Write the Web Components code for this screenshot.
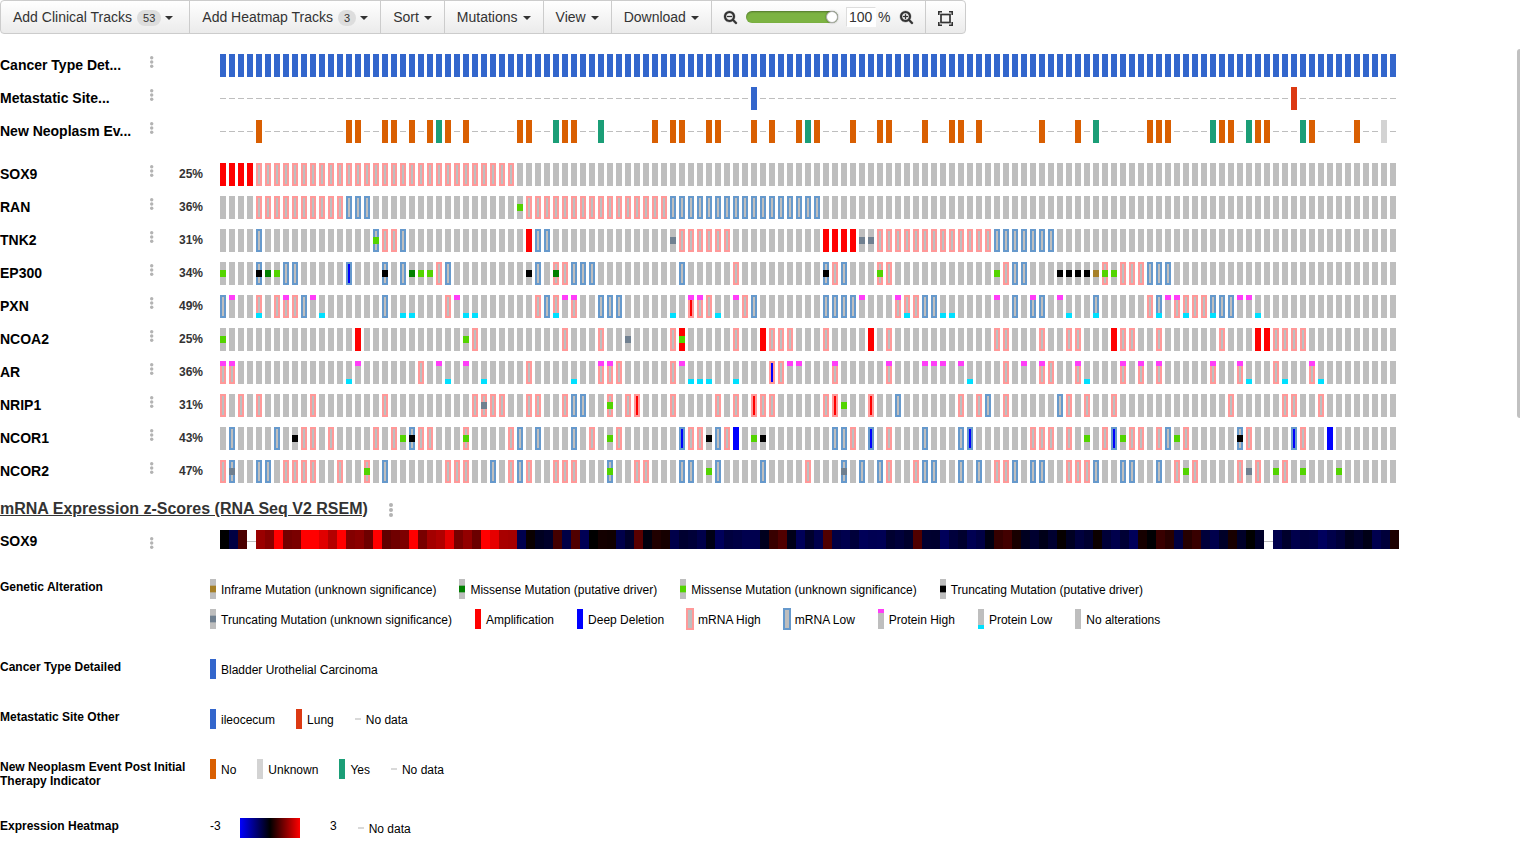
<!DOCTYPE html>
<html lang="en">
<head>
<meta charset="utf-8">
<title>OncoPrint</title>
<style>
  html, body { margin: 0; background: #fff; }
  body { position: relative; font-family: "Liberation Sans", Arial, sans-serif; font-size: 14px; line-height: 20px; color: #333; }
</style>
</head>
<body>
<onco-toolbar>
  <menu-button count="53" roomy>Add Clinical Tracks</menu-button>
  <menu-button count="3">Add Heatmap Tracks</menu-button>
  <menu-button>Sort</menu-button>
  <menu-button>Mutations</menu-button>
  <menu-button>View</menu-button>
  <menu-button>Download</menu-button>
  <zoom-control></zoom-control>
  <fullscreen-button></fullscreen-button>
</onco-toolbar>

<onco-print>
  <track-group>
    <track-row kind="clinical" name="Cancer Type Det..." data="blue:0-130"></track-row>
    <track-row kind="clinical" name="Metastatic Site..." data="blue:59 red:119"></track-row>
    <track-row kind="clinical" name="New Neoplasm Ev..." data="no:4,14,15,18,19,21,23,25,27,33,34,38,39,48,50,51,54,55,59,61,64,66,70,73,74,78,81,82,84,91,95,103-105,111,112,115,116,121,126 yes:24,37,42,65,97,110,114,120 unknown:129"></track-row>
  </track-group>
  <track-group>
    <track-row kind="gene" name="SOX9" value="25%" data="amp:0-3 hi:4-32"></track-row>
    <track-row kind="gene" name="RAN" value="36%" data="hi:4-13,34-49 lo:14-16,50-66 mu:33"></track-row>
    <track-row kind="gene" name="TNK2" value="31%" data="amp:34,67-70 hi:18,19,51-56,73-85 lo:4,17,20,35,36,86-92 mu:17 tu:50,71,72"></track-row>
    <track-row kind="gene" name="EP300" value="34%" data="del:14 hi:24,37,38,57,68,73,74,87,98,100-102 lo:4,7,8,14,18,20,25,35,39-41,51,67,69,88,89,103-105 mu:0,6,22,23,73,86,98,99 md:5,21,37 td:4,18,34,67,93-96 inf:97"></track-row>
    <track-row kind="gene" name="PXN" value="49%" data="amp:52 hi:4,6-8,25,35,37,39,52-54,58,75-77,103,106-109 lo:0,9,18,36,42-44,59,67-70,78,79,88,90,91,97,104,110-112 ph:1,7,10,26,38,39,52,53,57,71,75,86,90,93,105,106,113,114 pl:4,11,20,21,27,28,37,50,55,76,80,81,94,97,104,107,110,115"></track-row>
    <track-row kind="gene" name="NCOA2" value="25%" data="amp:15,51,60,72,99,115,116 hi:28,38,42,50,57,61-63,67,74,86,87,91,94,95,100,101,104,111,117-120 mu:0,27,51 tu:45"></track-row>
    <track-row kind="gene" name="AR" value="36%" data="del:61 hi:0,1,22,34,42-44,50,61,62,68,74,87,91,92,95,100,102,104,110,113,117,121 ph:0,1,15,24,27,42,43,51,63,64,68,74,78-80,82,89,91,95,100,102,104,110,113,121 pl:14,25,29,39,52-54,57,83,96,114,118,122"></track-row>
    <track-row kind="gene" name="NRIP1" value="31%" data="amp:46,59,68,72 hi:0,2,4,10,18,28-31,34,35,38,43,45,46,50,55,57,59-61,67,68,72,82,84,87,94,96,99,112,118,119,122 lo:39,40,75,85,93 mu:43,69 tu:29"></track-row>
    <track-row kind="gene" name="NCOR1" value="43%" data="del:51,57,72,83,99,119,123 hi:9,10,12,17,19,22,23,27,32,41,44,52,53,56,70,74,90-92,94,98,101,102,104,107,114,120 lo:1,6,21,33,35,39,51,55,68,69,72,78,82,83,99,105,113,119 mu:20,27,43,59,96,100,106 td:8,21,54,60,113"></track-row>
    <track-row kind="gene" name="NCOR2" value="47%" data="hi:0,7-10,13,16,25-27,32,34,37-39,46,47,65,74,77,86,87,94-96,106,108,113,115,118 lo:1,4,5,18,30,33,43,51,52,55,60,69,71,73,78,79,82,84,88,90,91,97,100,101,104 mu:16,43,54,107,117,120,124 tu:1,69,114"></track-row>
  </track-group>
  <group-heading>mRNA Expression z-Scores (RNA Seq V2 RSEM)</group-heading>
  <track-row kind="heat" name="SOX9" data="r00 b43 r4b - r9a r87 rff r73 r7a rff rff re0 rb4 rff r83 r8b r6e rff r60 r70 r7c rff r78 ra3 rb0 re5 r78 r93 r6b rff re6 ra8 ra4 b4e r0a b20 b2a r44 b45 r50 b55 r00 r13 r10 b4a b2a r58 b0e r20 r16 b4a b30 b38 b4a b15 b5a b3e b44 b4e b4e b1e r38 r50 b18 b58 b2c b4c r50 b44 b4e b3a b58 b52 b54 b30 b3a b2c r50 b30 b2e b5a b3c b2e b52 b44 b12 r35 r42 r18 b20 b30 b18 b30 r06 b22 b3e b30 r0c b38 b4c b34 b5a r16 b03 r38 r28 b40 r26 r38 b3a b4c b28 r18 b28 r00 b28 - b4c b2c b4c b40 b44 b5e b4a b3a b1e b2c b16 b4e b3a r1c"></track-row>
</onco-print>

<onco-legend>
  <legend-group class="wide" name="Genetic Alteration">
    <legend-item glyph="inf">Inframe Mutation (unknown significance)</legend-item>
    <legend-item glyph="md">Missense Mutation (putative driver)</legend-item>
    <legend-item glyph="mu">Missense Mutation (unknown significance)</legend-item>
    <legend-item glyph="td">Truncating Mutation (putative driver)</legend-item>
    <legend-item glyph="tu">Truncating Mutation (unknown significance)</legend-item>
    <legend-item glyph="amp">Amplification</legend-item>
    <legend-item glyph="del">Deep Deletion</legend-item>
    <legend-item glyph="hi">mRNA High</legend-item>
    <legend-item glyph="lo">mRNA Low</legend-item>
    <legend-item glyph="ph">Protein High</legend-item>
    <legend-item glyph="pl">Protein Low</legend-item>
    <legend-item glyph="base">No alterations</legend-item>
  </legend-group>
  <legend-group name="Cancer Type Detailed">
    <legend-item glyph="blue">Bladder Urothelial Carcinoma</legend-item>
  </legend-group>
  <legend-group name="Metastatic Site Other">
    <legend-item glyph="blue">ileocecum</legend-item>
    <legend-item glyph="red">Lung</legend-item>
    <legend-item glyph="none">No data</legend-item>
  </legend-group>
  <legend-group name="New Neoplasm Event Post Initial Therapy Indicator">
    <legend-item glyph="no">No</legend-item>
    <legend-item glyph="unknown">Unknown</legend-item>
    <legend-item glyph="yes">Yes</legend-item>
    <legend-item glyph="none">No data</legend-item>
  </legend-group>
  <legend-group name="Expression Heatmap">
    <heat-scale low="-3" high="3"></heat-scale>
    <legend-item glyph="none">No data</legend-item>
  </legend-group>
</onco-legend>
<scroll-thumb></scroll-thumb>

<script>
const COLORS = {
  base: '#bebebe', amp: '#ff0000', del: '#0000ff', hi: '#ff9999', lo: '#6699cc',
  mu: '#53d400', md: '#008000', td: '#000000', tu: '#708090', inf: '#a68028',
  ph: '#ff3df8', pl: '#00e0ff',
  blue: '#3366cc', red: '#dc3912', no: '#d95f02', yes: '#1b9e77', unknown: '#d3d3d3'
};
const CASES = 131, PITCH = 9, CELL = 6, ROW = 23;

const rect = (x, y, w, h, fill) => `<rect x="${x}" y="${y}" width="${w}" height="${h}" fill="${fill}"/>`;

/* "amp:0-3 hi:4,7" -> one set of alteration keys per case */
function parseCases(data) {
  const cases = Array.from({ length: CASES }, () => new Set());
  for (const token of data.split(' ')) {
    const [key, list] = token.split(':');
    for (const part of list.split(',')) {
      const [from, to = from] = part.split('-').map(Number);
      for (let i = from; i <= to; i++) cases[i].add(key);
    }
  }
  return cases;
}

function geneCell(keys, x) {
  const has = k => keys.has(k);
  let out = rect(x, 0, CELL, ROW, has('amp') ? COLORS.amp : has('del') ? COLORS.del : COLORS.base);
  for (const k of ['hi', 'lo'])
    if (has(k)) out += `<rect x="${x + 1}" y="1" width="${CELL - 2}" height="${ROW - 2}" fill="none" stroke="${COLORS[k]}" stroke-width="2"/>`;
  if (has('ph')) out += rect(x, 0, CELL, 5, COLORS.ph);
  if (has('pl')) out += rect(x, 18, CELL, 5, COLORS.pl);
  for (const k of ['mu', 'md', 'td', 'tu', 'inf'])
    if (has(k)) out += rect(x, 8, CELL, 7, COLORS[k]);
  return out;
}

function clinicalCell(keys, x) {
  const [key] = keys;
  return key ? rect(x, 0, CELL, ROW, COLORS[key]) : rect(x, 11, CELL, 1, COLORS.base);
}

function heatCell(code, x) {
  if (code === '-') return rect(x, 11, PITCH, 1, COLORS.base);
  const level = code.slice(1);
  return rect(x, 0, PITCH, 19, code[0] === 'r' ? `#${level}0000` : `#0000${level}`);
}

function define(name, render) {
  customElements.define(name, class extends HTMLElement {
    connectedCallback() {
      if (this.shadowRoot) return;
      this.attachShadow({ mode: 'open' }).innerHTML = render(this);
    }
  });
}

const BUTTON_CSS = `
  :host { display: block; margin-left: -1px; }
  :host(:first-child) { margin-left: 0; }
  .box { display: flex; align-items: center; box-sizing: border-box; height: 34px; margin: 0;
    padding: 0 12px; border: 1px solid #ccc; font: inherit; color: #333; white-space: nowrap;
    background: linear-gradient(#fff, #ebebeb); }
  :host(:first-child) .box { border-radius: 4px 0 0 4px; }
  :host(:last-child) .box { border-radius: 0 4px 4px 0; }
  button { cursor: pointer; }`;

define('onco-toolbar', () => `<style>:host { display: flex; }</style><slot></slot>`);

define('menu-button', el => `<style>${BUTTON_CSS}
  .box { gap: 4px; }
  .text { padding-right: 1px; }
  :host([roomy]) .box { padding-right: 16px; }
  .count { border-radius: 8px; background: #ddd; padding: 0 6px; font-size: 11px; line-height: 16px; margin-top: 2px; }
  .caret { border: 4px solid transparent; border-top-color: #333; border-bottom: 0; margin-top: 1px; }
  </style>
  <button class="box" type="button" aria-haspopup="true"><span class="text"><slot></slot></span>${
    el.hasAttribute('count') ? `<span class="count">${el.getAttribute('count')}</span>` : ''
  }<span class="caret"></span></button>`);

const LENS = 'M1152 704q0-185-131.5-316.5t-316.5-131.5-316.5 131.5-131.5 316.5 131.5 316.5 316.5 131.5 316.5-131.5 131.5-316.5zm512 832q0 53-37.5 90.5t-90.5 37.5q-54 0-90-38l-343-342q-179 124-399 124-143 0-273.5-55.5t-225-150-150-225-55.5-273.5 55.5-273.5 150-225 225-150 273.5-55.5 273.5 55.5 225 150 150 225 55.5 273.5q0 220-124 399l343 343q37 37 37 90z';
const lens = bars => `<svg width="13" height="13" viewBox="0 0 1664 1664" fill="#333" stroke="#333" stroke-width="40"><path d="${LENS}"/>${bars}</svg>`;
const BAR_H = '<rect x="384" y="640" width="640" height="128" rx="32"/>';
const BAR_V = '<rect x="640" y="384" width="128" height="640" rx="32"/>';

define('zoom-control', () => `<style>${BUTTON_CSS}
  .icon { border: 0; padding: 0; background: none; display: block; height: 13px; }
  .icon svg { display: block; overflow: visible; }
  input { font: inherit; color: #333; box-sizing: border-box; margin: 0; }
  .level { appearance: none; width: 92px; height: 12px; margin: 0 8px 0 9px; border-radius: 6px;
    background: #7cb342; box-shadow: inset 0 1px 2px rgba(0,0,0,.35); }
  .level::-webkit-slider-thumb { appearance: none; width: 12px; height: 12px; border-radius: 6px;
    border: 1px solid #aaa; background: #fff; box-shadow: 0 0 2px rgba(0,0,0,.4); }
  .percent { width: 30px; height: 20px; padding: 0 2px; border: 1px solid #fff;
    border-top-color: #ddd; border-left-color: #ddd; background: #fff; margin-right: 2px; }
  .in { margin-left: 10px; }
  </style>
  <div class="box">
    <button class="icon" type="button" aria-label="Zoom out">${lens(BAR_H)}</button>
    <input class="level" type="range" min="0" max="100" value="100" aria-label="Zoom level">
    <input class="percent" id="percent" type="text" value="100"><label for="percent">%</label>
    <button class="icon in" type="button" aria-label="Zoom in">${lens(BAR_H + BAR_V)}</button>
  </div>`);

define('fullscreen-button', () => `<style>${BUTTON_CSS} svg { display: block; margin-top: 3px; }</style>
  <button class="box" type="button" aria-label="Full screen">
    <svg width="15" height="15" viewBox="0 0 15 15" fill="none" stroke="#333">
      <rect x="3" y="3.5" width="9" height="8" stroke-width="1.7"/>
      <path stroke-width="1.6" d="M.8 4V.8H4M11 .8h3.200V4M14.200 11v3.200H11M4 14.200H.8V11"/>
    </svg></button>`);

define('onco-print', () => `<style>:host { display: block; padding-top: 20px; overflow-x: clip; }</style><slot></slot>`);
define('track-group', () => `<style>:host { display: grid; gap: 10px; margin-bottom: 20px; }
  :host(:nth-of-type(2)) { margin-bottom: 16px; }</style><slot></slot>`);

const dots = (r, step) => {
  const w = r * 2, h = step * 2 + w;
  return `<svg width="${Math.ceil(w)}" height="${Math.ceil(h)}" viewBox="0 0 ${Math.ceil(w)} ${Math.ceil(h)}" fill="#b3b3b3">${
    [0, 1, 2].map(i => `<circle cx="${w / 2}" cy="${r + step * i}" r="${r}"/>`).join('')}</svg>`;
};

define('track-row', el => {
  const kind = el.getAttribute('kind'), data = el.getAttribute('data');
  const cells = kind === 'heat'
    ? data.split(' ').map((c, i) => heatCell(c, i * PITCH))
    : parseCases(data).map((c, i) => (kind === 'gene' ? geneCell : clinicalCell)(c, i * PITCH));
  return `<style>
    :host { display: grid; grid-template-columns: 150px 4px 49px auto; justify-content: start; height: 23px; }
    .name { font-weight: bold; line-height: 23px; color: #000; white-space: nowrap; }
    button { border: 0; padding: 0; background: none; height: 12px; margin-top: 2px; cursor: pointer; }
    :host([kind="heat"]) button { margin-top: 7px; }
    button svg { display: block; }
    .value { font-weight: bold; font-size: 12px; line-height: 22px; text-align: right; }
    .cells { display: block; margin-left: 17px; }
    </style>
    <span class="name">${el.getAttribute('name')}</span>
    <button type="button" aria-label="Track options">${dots(1.7, 4.3)}</button>
    <span class="value">${el.getAttribute('value') || ''}</span>
    <svg class="cells" width="${CASES * PITCH}" height="${ROW}" shape-rendering="crispEdges">${cells.join('')}</svg>`;
});

define('group-heading', () => `<style>
  :host { display: flex; align-items: center; gap: 21px; height: 20px; margin-bottom: 11px; }
  h2 { margin: 0; font-size: 16px; line-height: 20px; text-decoration: underline; color: #333; }
  button { border: 0; padding: 0; background: none; margin-top: 2px; }
  svg { display: block; }
  </style><h2><slot></slot></h2><button type="button" aria-label="Group options">${dots(2, 5)}</button>`);

function legendGlyph(key) {
  const W = 6, H = 20;
  if (key === 'none') return rect(0, 9, W, 2, '#d9d9d9');
  if (['mu', 'md', 'td', 'tu', 'inf'].includes(key)) return rect(0, 0, W, H, COLORS.base) + rect(0, H / 3, W, H / 3, COLORS[key]);
  if (key === 'ph') return rect(0, 0, W, H, COLORS.base) + rect(0, 0, W, 4, COLORS.ph);
  if (key === 'pl') return rect(0, 0, W, H, COLORS.base) + rect(0, 16, W, 4, COLORS.pl);
  if (key === 'hi' || key === 'lo') return `<rect width="${W}" height="${H}" fill="${COLORS.base}" stroke="${COLORS[key]}" stroke-width="2"/>`;
  return rect(0, 0, W, H, COLORS[key]);
}

define('onco-legend', () => `<style>
  :host { display: grid; gap: 30px; margin-top: 26px; font-size: 12px; line-height: 14px; color: #000; }
  </style><slot></slot>`);
define('legend-group', el => `<style>
  :host { display: grid; grid-template-columns: 190px minmax(0, 1179px); column-gap: 20px; align-items: start; }
  h3 { margin: 0; padding-top: 1px; font-size: 12px; line-height: 14px; }
  div { display: flex; flex-wrap: wrap; gap: 10px 21px; }
  :host(.wide) div { column-gap: 23px; }
  </style><h3>${el.getAttribute('name')}</h3><div><slot></slot></div>`);
define('legend-item', el => `<style>
  :host { display: flex; gap: 5px; height: 20px; line-height: 22px; white-space: nowrap; }
  svg { display: block; overflow: visible; }
  </style><svg width="6" height="20">${legendGlyph(el.getAttribute('glyph'))}</svg><span><slot></slot></span>`);
define('heat-scale', el => `<style>
  :host { display: grid; grid-template-columns: 30px 60px auto; line-height: 16px; }
  .ramp { height: 20px; background: linear-gradient(90deg, #00f, #000, #f00); }
  .high { margin-left: 30px; }
  </style><span>${el.getAttribute('low')}</span><span class="ramp"></span><span class="high">${el.getAttribute('high')}</span>`);

define('scroll-thumb', () => `<style>
  :host { position: absolute; top: 49px; right: 0; width: 3px; height: 369px; background: #c1c1c1; border-radius: 3px 0 0 3px; }
  </style>`);
</script>
</body>
</html>
